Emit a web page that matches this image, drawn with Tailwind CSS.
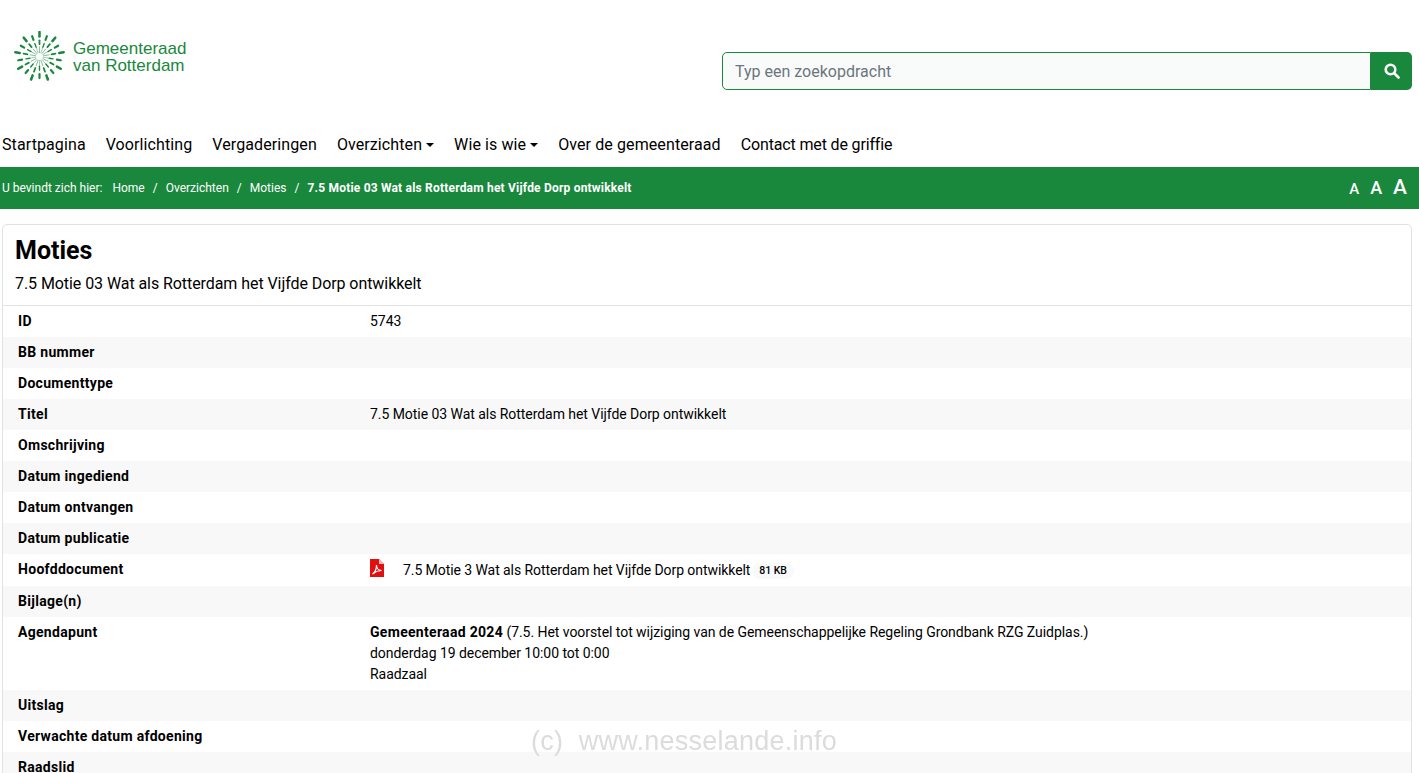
<!DOCTYPE html>
<html lang="nl"><head><meta charset="utf-8"><script src="https://cdn.jsdelivr.net/npm/@tailwindcss/browser@4"></script></head>
<body class="bg-white text-black overflow-hidden h-[773px] font-['Roboto',sans-serif]">
<header class="h-[125px] flex justify-between pl-[14px] pr-[7px]">
<div class="flex items-center gap-[8px] h-[52px] mt-[30px]">
<svg width="51" height="51" viewBox="-26 -26 52 52" fill="none" stroke="#19883c" stroke-linecap="round"><defs><g id="a"><path d="M0-25V-20.5" stroke-width="2.6"/><path d="M0-16.500V-12.500" stroke-width="1.800"/><path d="M0-10V-4" stroke-width=".5"/></g><g id="b"><path d="M0-22V-18" stroke-width="2.200"/><path d="M0-14V-10" stroke-width="1.400"/><path d="M0-9V-4" stroke-width=".4"/></g></defs><use href="#a"/><use href="#b" transform="rotate(20)"/><use href="#a" transform="rotate(40)"/><use href="#b" transform="rotate(60)"/><use href="#a" transform="rotate(80)"/><use href="#b" transform="rotate(100)"/><use href="#a" transform="rotate(120)"/><use href="#b" transform="rotate(140)"/><use href="#a" transform="rotate(160)"/><use href="#b" transform="rotate(180)"/><use href="#a" transform="rotate(200)"/><use href="#b" transform="rotate(220)"/><use href="#a" transform="rotate(240)"/><use href="#b" transform="rotate(260)"/><use href="#a" transform="rotate(280)"/><use href="#b" transform="rotate(300)"/><use href="#a" transform="rotate(320)"/><use href="#b" transform="rotate(340)"/></svg>
<div class="text-[#19883c] text-[17px] leading-[17px] font-['Liberation_Sans',sans-serif] mt-[1px]"><div>Gemeenteraad</div><div>van Rotterdam</div></div>
</div>
<div class="flex w-[690px] h-[38px] mt-[52px]">
<div class="flex-1 border border-[#19883c] rounded-l-[5px] bg-[#f9fbfa] pl-[12px] pt-[1px] flex items-center text-[16px] text-[#6c757d]">Typ een zoekopdracht</div>
<div class="w-[41px] bg-[#19883c] rounded-r-[5px] flex items-center justify-center"><svg width="16" height="16" viewBox="0 0 16 16" fill="none" stroke="#fff" stroke-width="2.600" stroke-linecap="round"><circle cx="6.500" cy="6.500" r="4.800"/><path d="M10.500 10.500l4 4"/></svg></div>
</div>
</header>
<nav class="h-[40px] pl-[2px] flex items-center gap-[20px] text-[16px] tracking-[.1px] mb-[2px]">
<span>Startpagina</span><span>Voorlichting</span><span>Vergaderingen</span>
<span class="flex items-center gap-[4px]">Overzichten<span class="w-0 h-0 border-x-[4px] border-x-transparent border-t-[4px] border-t-black"></span></span>
<span class="flex items-center gap-[4px]">Wie is wie<span class="w-0 h-0 border-x-[4px] border-x-transparent border-t-[4px] border-t-black"></span></span>
<span>Over de gemeenteraad</span><span class="tracking-[-.15px]">Contact met de griffie</span>
</nav>
<div class="h-[42px] bg-[#19883c] text-white flex items-center justify-between pl-[2px] pr-[12px] text-[12px]">
<div class="flex items-center"><span class="mr-[10px]">U bevindt zich hier:</span><span>Home</span><span class="mx-[8px]">/</span><span>Overzichten</span><span class="mx-[8px]">/</span><span>Moties</span><span class="mx-[8px]">/</span><span class="font-bold tracking-[.2px]">7.5 Motie 03 Wat als Rotterdam het Vijfde Dorp ontwikkelt</span></div>
<div class="flex items-baseline gap-[11px] font-medium"><span class="text-[15px]">A</span><span class="text-[18px]">A</span><span class="text-[21px]">A</span></div>
</div>
<main class="mx-[2px] mt-[15px] border border-[#dfe3e6] rounded-[5px] w-[1410px]">
<div class="h-[81px] px-[12px] pt-[9px] border-b border-[#dfe3e6]">
<h1 class="text-[25px] leading-[34px] font-bold">Moties</h1>
<p class="text-[16px] leading-[24px] mt-[4px] tracking-[-.07px]">7.5 Motie 03 Wat als Rotterdam het Vijfde Dorp ontwikkelt</p>
</div>
<div class="text-[14px] leading-[21px] tracking-[-.05px]">
<div class="grid grid-cols-[352px_1fr] px-[15px] py-[5px]"><b class="font-bold tracking-[.3px]">ID</b><span>5743</span></div>
<div class="grid grid-cols-[352px_1fr] px-[15px] py-[5px] bg-[#f8f8f8]"><b class="font-bold tracking-[.3px]">BB nummer</b><span></span></div>
<div class="grid grid-cols-[352px_1fr] px-[15px] py-[5px]"><b class="font-bold tracking-[.3px]">Documenttype</b><span></span></div>
<div class="grid grid-cols-[352px_1fr] px-[15px] py-[5px] bg-[#f8f8f8]"><b class="font-bold tracking-[.3px]">Titel</b><span>7.5 Motie 03 Wat als Rotterdam het Vijfde Dorp ontwikkelt</span></div>
<div class="grid grid-cols-[352px_1fr] px-[15px] py-[5px]"><b class="font-bold tracking-[.3px]">Omschrijving</b><span></span></div>
<div class="grid grid-cols-[352px_1fr] px-[15px] py-[5px] bg-[#f8f8f8]"><b class="font-bold tracking-[.3px]">Datum ingediend</b><span></span></div>
<div class="grid grid-cols-[352px_1fr] px-[15px] py-[5px]"><b class="font-bold tracking-[.3px]">Datum ontvangen</b><span></span></div>
<div class="grid grid-cols-[352px_1fr] px-[15px] py-[5px] bg-[#f8f8f8]"><b class="font-bold tracking-[.3px]">Datum publicatie</b><span></span></div>
<div class="grid grid-cols-[352px_1fr] px-[15px] pt-[5px] h-[32px]"><b class="font-bold tracking-[.3px]">Hoofddocument</b><span class="flex items-start"><svg width="14" height="18" viewBox="0 0 14 18" class="mr-[19px]"><path d="M0 0h9l5 5v13H0z" fill="#e0100f"/><path d="M9 0v5h5z" fill="#fff" opacity=".7"/><path d="M2.500 15c3-2 4-6 4-9 0 3 2 5.500 5 5.500-3 0-6 1-9 3.500z" fill="none" stroke="#fff" stroke-width="1.200"/></svg><span class="mt-[1px] tracking-[-.07px]">7.5 Motie 3 Wat als Rotterdam het Vijfde Dorp ontwikkelt</span><span class="text-[10.500px] ml-[2px] mt-[4px] font-medium bg-[#f8f9fa] rounded-full px-[7px] leading-[16px]">81 KB</span></span></div>
<div class="grid grid-cols-[352px_1fr] px-[15px] py-[5px] bg-[#f8f8f8]"><b class="font-bold tracking-[.3px]">Bijlage(n)</b><span></span></div>
<div class="grid grid-cols-[352px_1fr] px-[15px] py-[5px]"><b class="font-bold tracking-[.3px]">Agendapunt</b><span><b class="font-bold tracking-[.3px]">Gemeenteraad 2024</b> (7.5. Het voorstel tot wijziging van de Gemeenschappelijke Regeling Grondbank RZG Zuidplas.)<br>donderdag 19 december 10:00 tot 0:00<br>Raadzaal</span></div>
<div class="grid grid-cols-[352px_1fr] px-[15px] py-[5px] bg-[#f8f8f8]"><b class="font-bold tracking-[.3px]">Uitslag</b><span></span></div>
<div class="grid grid-cols-[352px_1fr] px-[15px] py-[5px]"><b class="font-bold tracking-[.3px]">Verwachte datum afdoening</b><span></span></div>
<div class="grid grid-cols-[352px_1fr] px-[15px] py-[5px] bg-[#f8f8f8]"><b class="font-bold tracking-[.3px]">Raadslid</b><span></span></div>
</div>
</main>
<div class="fixed left-[531px] top-[725px] text-[27px] leading-[32px] tracking-[.25px] text-[#dcdcdc] font-['Liberation_Sans',sans-serif] pointer-events-none">(c)&nbsp; www.nesselande.info</div>
</body></html>
